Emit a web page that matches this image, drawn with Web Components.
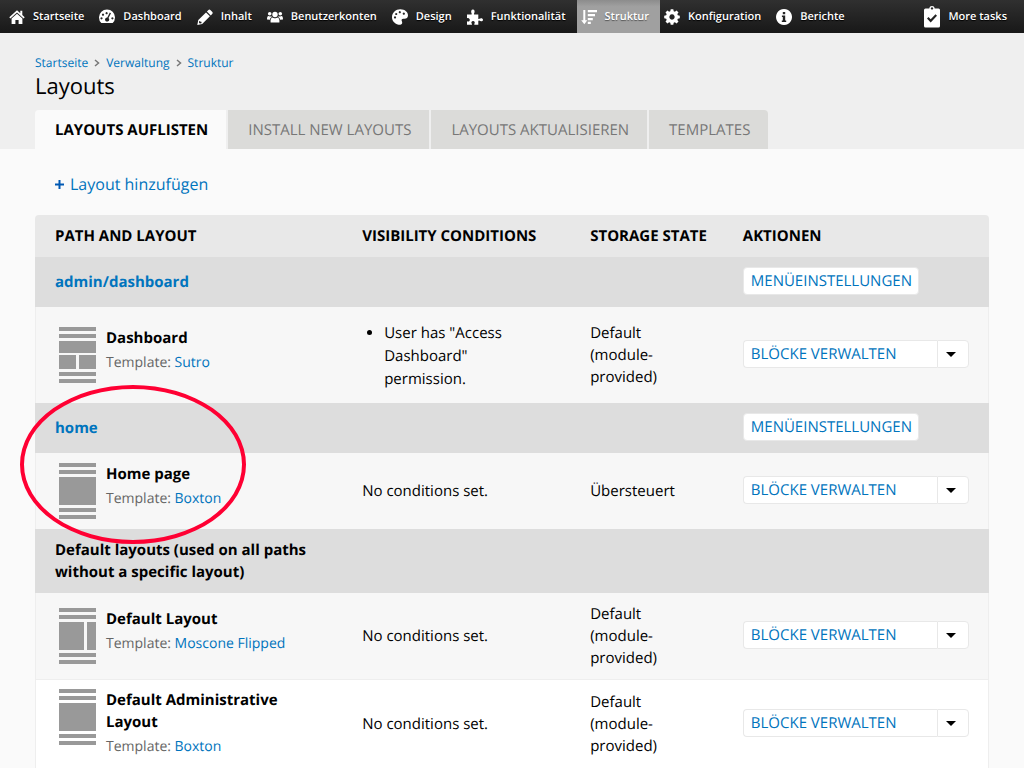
<!DOCTYPE html>
<html lang="de">
<head>
<meta charset="utf-8">
<meta name="viewport" content="width=device-width, initial-scale=1">
<title>Layouts</title>
<style>
  body { margin: 0; background: #fafafa; color: #000; font-family: "Open Sans", sans-serif; font-size: 15px; line-height: 22px; overflow-x: hidden; text-rendering: geometricPrecision; }
</style>
</head>
<body>
<admin-page></admin-page>

<script>
const ICONS = {
  home: '<path d="M8 1.2 0.3 8.2l1.1 1.2L8 3.5l6.600 5.900 1.100-1.200-2.400-2.200V1.800h-2v2.400z"/><path d="M2.600 9.500 8 4.700l5.400 4.800V15H9.600v-4H6.400v4H2.600z"/>',
  gauge: '<path fill-rule="evenodd" d="M2.300 14A8 8 0 1 1 13.700 14zM2.500 8.200a1.100 1.100 0 1 0 .01 0zM4 4.600a1.100 1.100 0 1 0 .01 0zM7.600 3.100a1.100 1.100 0 1 0 .01 0zM13.400 8.200a1.100 1.100 0 1 0 .01 0zM10.800 3.600 8.300 8.400a2.100 2.100 0 1 0 1.200.5L12 4.300z"/>',
  pencil: '<path fill-rule="evenodd" d="M11.200 1.200a1.700 1.700 0 0 1 2.400 0l1.500 1.500a1.700 1.700 0 0 1 0 2.400L13.800 6.400 9.900 2.500zM9 3.400 12.900 7.300 5.200 15 .3 16l1-4.900zM2.300 12 2 13.700l.8.800L4.500 14.200V12.800H3.200V12z"/>',
  users: '<circle cx="8" cy="5.500" r="2.700"/><circle cx="2.700" cy="4.800" r="1.800"/><circle cx="13.300" cy="4.800" r="1.800"/><path d="M3.600 13.500c-.4-3 .6-4.800 2-4.900.9.900 3.900.9 4.800 0 1.400.1 2.400 1.900 2 4.900zM0 10.500C0 8.200.5 7 1.400 7c.8.600 2.100.600 2.800.2l.8.800c-1.300.5-1.900 1.300-2.100 2.800zM16 10.500C16 8.200 15.500 7 14.600 7c-.8.600-2.100.6-2.800.2L11 8c1.300.5 1.900 1.300 2.100 2.800z"/>',
  palette: '<path fill-rule="evenodd" d="M8.300.2C13 .2 16 3.200 16 6.300c0 2.500-1.500 3.500-3.500 3.500h-1.300c-1.500 0-2 1.200-1.400 2.300.9 1.600.4 3.700-1.500 3.700C3.500 15.800 0 12.400 0 8.200 0 3.600 3.800.2 8.300.2zM3 7.300a1.100 1.100 0 1 0 .01 0zM4.200 3.900a1.100 1.100 0 1 0 .01 0zM7.800 2.100a1.100 1.100 0 1 0 .01 0zM11.800 3.500a1.100 1.100 0 1 0 .01 0z"/>',
  puzzle: '<path d="M0 5.500h4.200c.5 0 .7-.5.400-1C3.600 2.800 4.300 .6 5.900 .6s2.300 2.200 1.200 3.900c-.3.500-.1 1 .4 1h3.800v3.900c0 .6.500.8 1 .4 1.600-1.200 3.700-.6 3.700.9s-2.100 2.100-3.700.9c-.5-.4-1-.2-1 .4v3.800H7.800c-.5 0-.7-.5-.4-1 .9-1.300.2-2.800-1.300-2.800s-2.300 1.500-1.300 2.800c.4.500.2 1-.3 1H0v-3.600c1.800.8 2.800-.1 2.800-1.200S1.700 8.500 0 9.300z"/>',
  sort: '<path d="M2.300 1h2v10.300h2L3.300 15.300.2 11.300h2.100zM6.800 1H16v2.200H6.800zM6.800 5h7.200v2.200H6.800zM6.800 9h5v2.200h-5zM6.800 12.800h3V15h-3z"/>',
  gear: '<path fill-rule="evenodd" d="M6.700.2h2.600l.4 2 1.200.5 1.700-1.200 1.900 1.900-1.200 1.700.5 1.200 2 .4v2.600l-2 .4-.5 1.200 1.200 1.700-1.900 1.900-1.700-1.200-1.200.5-.4 2H6.700l-.4-2-1.200-.5-1.700 1.200-1.900-1.900 1.200-1.700-.5-1.200-2-.4V6.700l2-.4.500-1.200L1.500 3.400l1.900-1.900 1.700 1.200 1.200-.5zM8 5.300a2.700 2.700 0 1 0 .01 0z"/>',
  info: '<path fill-rule="evenodd" d="M8 0a8 8 0 1 0 .01 0zM6.800 2.900h2.400v2.300H6.800zM5.900 6.500h3.300v4.900h1v1.500H5.800v-1.500h1V8h-.9z"/>',
  clipboard: '<path fill-rule="evenodd" d="M1.500 2.500H5.300C5.500-.8 10.500-.8 10.700 2.500h3.800Q16 2.500 16 4v16q0 1.500-1.500 1.500h-13Q0 21.500 0 20V4Q0 2.500 1.500 2.500zM8 1.200a1.200 1.200 0 1 0 .01 0zM4.500 11 3 12.600 6.700 16.600 13 9.800 11.500 8.200 6.700 13.300z"/>'
};

/* Registers an element whose shadow root is built from the given markup. */
function component(name, styles, markup) {
  customElements.define(name, class extends HTMLElement {
    constructor() { super(); this.attachShadow({ mode: 'open' }); }
    connectedCallback() {
      const body = typeof markup === 'function' ? markup(this) : markup;
      this.shadowRoot.innerHTML = '<style>*{box-sizing:border-box}a{color:#0074bd;text-decoration:none}button{text-rendering:inherit}' + styles + '</style>' + body;
    }
  });
}

component('toolbar-item', `
  :host { display: block; }
  a { display: flex; align-items: center; gap: 8px; height: 33px; padding: 0 11px 0 4px; color: #fff; font-size: 11px; font-weight: 600; line-height: 16px; white-space: nowrap; text-shadow: 0 1px 1px #000; }
  span { padding-top: 1px; }
  svg { width: 16px; height: 16px; fill: #fff; flex: none; }
  :host([icon=clipboard]) svg { height: 22px; }
  :host([active]) a { background: linear-gradient(#8c8c8c, #a0a0a0 20%); text-shadow: 0 1px 1px #555; }
`, el => `<a href="#"><svg viewBox="0 0 16 ${el.getAttribute('icon') === 'clipboard' ? 22 : 16}" aria-hidden="true">${ICONS[el.getAttribute('icon')]}</svg><span><slot></slot></span></a>`);

component('admin-toolbar', `
  :host { display: block; background: linear-gradient(#303030, #181818); }
  nav { display: flex; padding: 0 6px 0 5px; }
  .last { margin-left: auto; }
`, `<nav aria-label="Verwaltung">
  <toolbar-item icon="home">Startseite</toolbar-item>
  <toolbar-item icon="gauge">Dashboard</toolbar-item>
  <toolbar-item icon="pencil">Inhalt</toolbar-item>
  <toolbar-item icon="users">Benutzerkonten</toolbar-item>
  <toolbar-item icon="palette">Design</toolbar-item>
  <toolbar-item icon="puzzle">Funktionalität</toolbar-item>
  <toolbar-item icon="sort" active>Struktur</toolbar-item>
  <toolbar-item icon="gear">Konfiguration</toolbar-item>
  <toolbar-item icon="info">Berichte</toolbar-item>
  <toolbar-item class="last" icon="clipboard">More tasks</toolbar-item>
</nav>`);

component('bread-crumb', `
  :host { display: block; font-size: 12px; line-height: 16px; }
  nav { display: flex; align-items: center; gap: 6px; }
  svg { width: 6px; height: 8px; fill: none; stroke: #777; stroke-width: 1.500; }
`, () => ['Startseite', 'Verwaltung', 'Struktur']
  .map(t => `<a href="#">${t}</a>`)
  .join('<svg viewBox="0 0 6 8" aria-hidden="true"><path d="M1 1l3.500 3L1 7"/></svg>')
  .replace(/^/, '<nav aria-label="Breadcrumb">') + '</nav>');

component('page-tabs', `
  :host { display: block; }
  nav { display: flex; gap: 2px; }
  a { padding: 9px 18px 8px 20px; background: #dbdbd9; color: #777; text-transform: uppercase; white-space: nowrap; }
  a:first-child { border-top-left-radius: 4px; }
  a:last-child { border-top-right-radius: 4px; }
  a[aria-current] { background: #fafafa; color: #000; font-weight: 700; }
`, `<nav aria-label="Tabs"><a href="#" aria-current="page">Layouts auflisten</a><a href="#">Install new layouts</a><a href="#">Layouts aktualisieren</a><a href="#">Templates</a></nav>`);

component('page-header', `
  :host { display: block; background: #efefef; padding: 22px 35px 0; }
  h1 { margin: 0 0 9px; font-size: 22px; line-height: 30px; font-weight: 400; }
`, `<bread-crumb></bread-crumb><h1>Layouts</h1><page-tabs></page-tabs>`);

const THUMBS = {
  boxton: '<path d="M0 14h37v28H0z"/>',
  sutro: '<path d="M0 14h37v12H0zM0 28h17v14H0zM20 28h17v14H20z"/>',
  flipped: '<path d="M0 14h25v28H0zM28 14h9v28h-9z"/>'
};
component('layout-summary', `
  :host { display: flex; gap: 10px; padding-left: 4px; align-items: flex-start; }
  svg { width: 37px; height: 56px; flex: none; fill: #999; }
  h3 { margin: 0 0 2px; font-size: 15px; line-height: 22px; }
  p { margin: 0; font-size: 14px; line-height: 24px; color: #666; }
`, el => `<svg viewBox="0 0 37 56" aria-hidden="true"><path d="M0 0h37v4H0zM0 7h37v4H0zM0 45h37v4H0zM0 52h37v4H0z"/>${THUMBS[el.getAttribute('kind')]}</svg>
  <div><h3><slot></slot></h3><p>Template: <a href="#">${el.getAttribute('template')}</a></p></div>`);

component('menu-button', `
  :host { display: block; height: 30px; }
  button { display: block; height: 28px; padding: 0 6px 0 7px; border: 1px solid #e8e8e8; border-radius: 4px; background: #fff; color: #0074bd; font: inherit; line-height: 24px; text-transform: uppercase; }
`, `<button type="button"><slot></slot></button>`);

component('drop-button', `
  :host { display: flex; max-width: 226px; margin-bottom: 2px; }
  button { height: 28px; border: 1px solid #e8e8e8; background: #fff; color: #0074bd; font: inherit; line-height: 24px; text-align: left; text-transform: uppercase; white-space: nowrap; }
  .main { flex: 1; padding: 0 7px; border-radius: 4px 0 0 4px; border-right: 0; }
  .more { width: 32px; padding: 0 4px 0 0; border-radius: 0 4px 4px 0; display: grid; place-items: center; }
  svg { width: 10px; height: 5px; }
`, `<button type="button" class="main"><slot></slot></button><button type="button" class="more" aria-label="Weitere Aktionen"><svg viewBox="0 0 10 5" aria-hidden="true"><path d="M0 0h10L5 5z"/></svg></button>`);

component('layouts-table', `
  :host { display: block; }
  table { width: 100%; table-layout: fixed; border-collapse: separate; border-spacing: 0; }
  th, td { padding: 10px 20px; text-align: left; vertical-align: middle; }
  thead th { background: #e8e8e8; text-transform: uppercase; white-space: nowrap; }
  thead th:first-child { border-top-left-radius: 4px; width: 32.2%; }
  thead th:nth-child(2) { width: 23.9%; }
  thead th:nth-child(3) { width: 16%; }
  thead th:last-child { border-top-right-radius: 4px; }
  .group > * { background: #ddd; }
  .odd > td { background: #f7f7f7; }
  .even > td { background: linear-gradient(#eee 1px, #fff 1px); }
  td:first-child { box-shadow: inset 1px 0 #eee; }
  td:last-child:not(.plain) { box-shadow: inset -1px 0 #eee; }
  ul { margin: 5px 0 2px; padding-left: 22px; line-height: 23px; }
`, () => {
  const group = (title, button) => `<tr class="group"><th scope="rowgroup">${title}</th><td class="plain"></td><td class="plain"></td><td class="plain">${button ? '<menu-button>Menüeinstellungen</menu-button>' : ''}</td></tr>`;
  const row = (cls, name, kind, template, cond, state) => `<tr class="${cls}"><td><layout-summary kind="${kind}" template="${template}">${name}</layout-summary></td><td>${cond}</td><td>${state}</td><td><drop-button>Blöcke verwalten</drop-button></td></tr>`;
  const none = 'No conditions set.', def = 'Default (module-provided)';
  return `<table><thead><tr><th scope="col">Path and layout</th><th scope="col">Visibility conditions</th><th scope="col">Storage state</th><th scope="col">Aktionen</th></tr></thead><tbody>
  ${group('<a href="#">admin/dashboard</a>', true)}
  ${row('odd', 'Dashboard', 'sutro', 'Sutro', '<ul><li>User has "Access Dashboard" permission.</li></ul>', def)}
  ${group('<a href="#">home</a>', true)}
  ${row('odd', 'Home page', 'boxton', 'Boxton', none, 'Übersteuert')}
  ${group('Default layouts (used on all paths without a specific layout)', false)}
  ${row('odd', 'Default Layout', 'flipped', 'Moscone Flipped', none, def)}
  ${row('even', 'Default Administrative Layout', 'boxton', 'Boxton', none, def)}
  </tbody></table>`;
});

component('highlight-ring', `
  :host { display: block; position: absolute; left: 20px; top: 385px; width: 226px; height: 159px; border: 4px solid #ff0033; border-radius: 50%; box-sizing: border-box; pointer-events: none; }
`, '');

component('admin-page', `
  :host { display: block; position: relative; }
  main { padding: 24px 35px 0; }
  .add { display: flex; align-items: center; gap: 6px; width: max-content; margin: 0 20px 20px; font-size: 16px; line-height: 22px; }
  .add svg { width: 9px; height: 9px; fill: none; stroke: #0059b3; stroke-width: 2; }
`, `<admin-toolbar></admin-toolbar><page-header></page-header>
<main><a class="add" href="#"><svg viewBox="0 0 9 9" aria-hidden="true"><path d="M0 4.500h9M4.500 0v9"/></svg>Layout hinzufügen</a><layouts-table></layouts-table></main>
<highlight-ring></highlight-ring>`);
</script>
</body>
</html>
